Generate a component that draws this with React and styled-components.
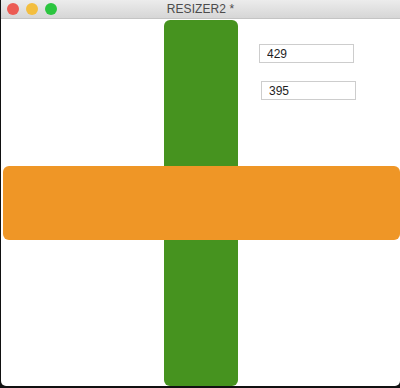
import React, { useState } from "react";
import styled, { createGlobalStyle } from "styled-components";

const GlobalStyle = createGlobalStyle`
  html, body {
    margin: 0;
    padding: 0;
    background: #111;
    font-family: "Liberation Sans", Arial, sans-serif;
  }
`;

const Window = styled.div`
  margin-left: 1px;
  width: 399px;
  height: 386px;
  background: #ffffff;
  border-bottom-left-radius: 5px;
  border-bottom-right-radius: 5px;
  overflow: hidden;
  display: flex;
  flex-direction: column;
`;

const TitleBar = styled.div`
  position: relative;
  height: 18px;
  flex-shrink: 0;
  background: linear-gradient(#ececec, #d6d6d6);
  border-bottom: 1px solid #c4c4c4;
  display: flex;
  align-items: center;
  justify-content: center;
`;

const Lights = styled.div`
  position: absolute;
  left: 6px;
  top: 3px;
  display: flex;
  gap: 7px;
`;

const Light = styled.span`
  width: 12px;
  height: 12px;
  border-radius: 50%;
  background: ${(p) => p.$color};
`;

const Title = styled.span`
  font-size: 12px;
  color: #4c4c4c;
  letter-spacing: 0.1px;
`;

const Canvas = styled.div`
  flex: 1;
  display: grid;
  grid-template-columns: 2px 161px 74px 1fr;
  grid-template-rows: 147px 74px 1fr;
`;

const VBar = styled.div`
  grid-column: 3;
  grid-row: 1 / -1;
  margin-top: 1px;
  background: #46931f;
  border-radius: 6px;
`;

const HBar = styled.div`
  grid-column: 2 / -1;
  grid-row: 2;
  background: #ef9626;
  border-radius: 6px;
`;

const Fields = styled.div`
  grid-column: 4;
  grid-row: 1;
  padding-top: 25px;
  padding-left: 21px;
  display: flex;
  flex-direction: column;
  gap: 18px;
`;

const Field = styled.input`
  box-sizing: border-box;
  width: 95px;
  height: 19px;
  margin-left: ${(p) => p.$shift || 0}px;
  border: 1px solid #cdcdcd;
  padding: 0 0 0 7px;
  font-family: "Liberation Sans", Arial, sans-serif;
  font-size: 12px;
  color: #1e1e1e;
  background: #fff;
  outline: none;
`;

const App = () => {
  const [w, setW] = useState("429");
  const [h, setH] = useState("395");

  return (
    <>
      <GlobalStyle />
      <Window>
        <TitleBar>
          <Lights>
            <Light $color="#ec5b53" />
            <Light $color="#f3be3f" />
            <Light $color="#2bc53f" />
          </Lights>
          <Title>RESIZER2 *</Title>
        </TitleBar>
        <Canvas>
          <VBar />
          <HBar />
          <Fields>
            <Field value={w} onChange={(e) => setW(e.target.value)} />
            <Field $shift={2} value={h} onChange={(e) => setH(e.target.value)} />
          </Fields>
        </Canvas>
      </Window>
    </>
  );
};

export default App;
